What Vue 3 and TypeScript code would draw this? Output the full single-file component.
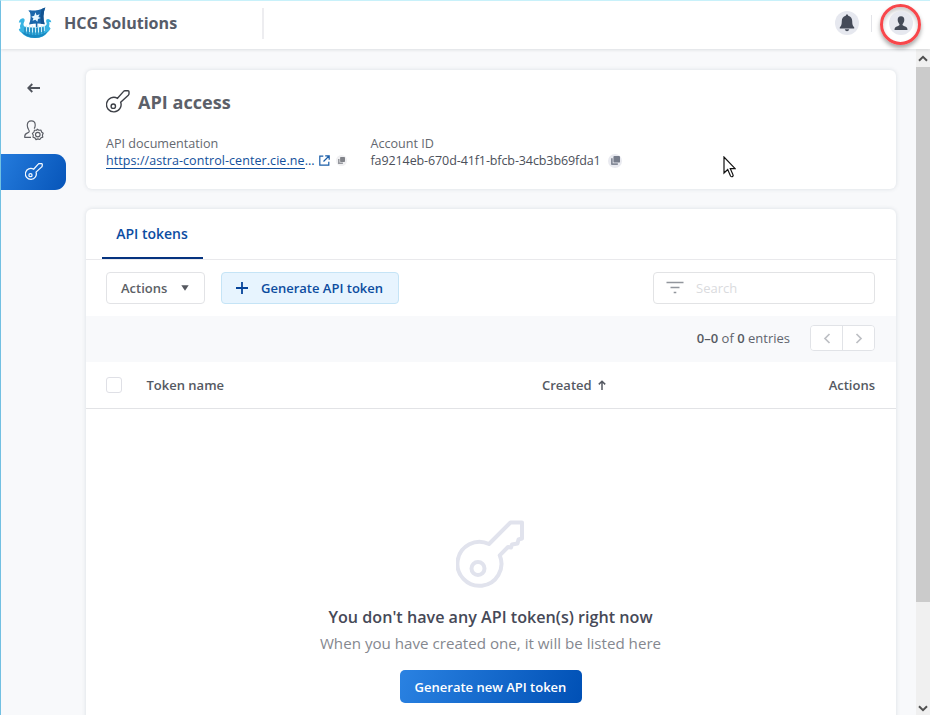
<script setup lang="ts">
import { ref } from 'vue'

interface Column {
  key: string
  label: string
}

const columns: Column[] = [
  { key: 'name', label: 'Token name' },
  { key: 'created', label: 'Created' },
  { key: 'actions', label: 'Actions' },
]
const accountId = 'fa9214eb-670d-41f1-bfcb-34cb3b69fda1'
const docsUrl = 'https://astra-control-center.cie.ne'
const search = ref<string>('')
const total = ref<number>(0)
const keyShape = 'M11.5 8.3 L17.6 1.4 Q18.1 .8 19 .8 H22 Q23 .8 23 1.8 V3.8 Q23 4.6 22.3 5.2 L14.7 12.2 A7.3 7.3 0 1 1 11.5 8.3 Z'
</script>

<template>
  <div class="app">
    <header class="topbar">
      <svg class="logo" width="34" height="32" viewBox="0 0 34 32">
        <path d="M10.3 3.6 Q12.5 2.8 14 3.6 Q20 3.6 27.3 .4 Q24 8 26.6 17.2 Q19 15.8 11 17.6 Q13.6 11 12 5.6Z" fill="#1a67ab" />
        <path d="M27.3 .4 Q24 8 26.6 17.2 L22.8 16.8 Q21.6 9 23.6 2Z" fill="#135390" />
        <path d="M17.5 5.2 L18.6 8.2 L21.6 7.2 L20.4 10 L22.8 11 L20 12 L19.4 14.8 L17.4 12.8 L14.6 13.8 L15.4 11.2 L13.2 9.8 L16.2 8.8Z" fill="#e6f7ff" />
        <path d="M18.6 16 V20" stroke="#1a67ab" stroke-width="1.6" />
        <path d="M.8 15.6 Q1.6 11.6 4.8 11.2 Q7.4 11.4 6.4 14.4 Q4.6 17.4 6.4 19.4 Q17 22 26.6 19.2 Q29.6 17.6 28.4 15.4 Q27.4 12 30.2 12 Q33 12.6 33.4 15.2 L31.2 15 Q32 17.4 31 19.6 L32.6 21.4 Q31 24.4 29.4 25.4 Q25.4 31 17 31 Q7.6 31 3.8 26 Q.8 24.6 .8 22 L2.4 21.4 Q1.4 18.6 3.2 15.4Z" fill="#38b4e3" />
        <path d="M3.4 24.6 Q9 28 17 28 Q25 28 30 24 Q26 31 17 31 Q7.4 31 3.4 24.6Z" fill="#1788c2" />
        <path d="M8.5 18.5 V24.5 M11.5 18.5 V25 M14.5 18.5 V25.5 M17.5 19 V25.5 M20.5 18.5 V25.5 M23.5 18.5 V25 M26.3 18.5 V24" stroke="#cfeffa" stroke-width="1.1" />
        <path d="M7 20.5 V26.5 M10 20.5 V27.5 M13 20.5 V28 M16 20.5 V28 M19 20.5 V28 M22 20.5 V27.5 M25 20.5 V26.5" stroke="#176fa8" stroke-width=".9" />
      </svg>
      <span class="brand">HCG Solutions</span>
      <span class="brand-divider"></span>
      <button class="round bell" aria-label="Notifications">
        <svg width="16" height="18" viewBox="0 0 16 18" fill="#454b58">
          <path d="M8 .5 C8.8 .5 9.2 1 9.2 1.7 C12 2.3 13.2 4.5 13.2 7 C13.2 10.6 13.8 12 15.2 13.2 V14.4 H.8 V13.2 C2.2 12 2.8 10.6 2.8 7 C2.8 4.5 4 2.3 6.8 1.7 C6.8 1 7.2 .5 8 .5Z" />
          <path d="M5.8 15.2 H10.2 Q9.8 17.2 8 17.2 Q6.2 17.2 5.8 15.2Z" />
        </svg>
      </button>
      <span class="user-divider"></span>
      <div class="highlight">
        <button class="round" aria-label="Account">
          <svg width="14" height="15" viewBox="0 0 14 15" fill="#444b58">
            <path d="M7 .3 C9.3 .3 10.5 1.8 10.3 4 C10.2 6 9.2 7.5 8.5 8.3 C8.5 9.5 9 9.8 10.5 10.2 C12.6 10.7 13.5 11.6 13.5 14 H.5 C.5 11.6 1.4 10.7 3.5 10.2 C5 9.8 5.5 9.5 5.5 8.3 C4.8 7.5 3.8 6 3.7 4 C3.5 1.8 4.7 .3 7 .3Z" />
          </svg>
        </button>
      </div>
    </header>

    <div class="body">
      <nav class="sidebar">
        <a class="nav-item">
          <svg width="14" height="10" viewBox="0 0 14 10" fill="none" stroke="#50545c" stroke-width="1.8">
            <path d="M13 5 H1.5 M5.3 1 L1.3 5 L5.3 9" />
          </svg>
        </a>
        <a class="nav-item">
          <svg width="20" height="21" viewBox="0 0 20 21" fill="none" stroke="#5b5e66" stroke-width="1.15">
            <path d="M7 17.3 H.8 C.3 14.5 1.4 13.7 3.6 12.9 C5.5 12.2 5.5 11 4.7 9.8 C3.6 8 3.2 6.8 3.3 4.8 C3.5 2.2 5 .8 7.3 .8 C9.7 .8 11.2 2.3 11.2 4.8 C11.3 6.4 10.8 7.6 10.2 8.6" />
            <path d="M13.3 9.2 L15 10.3 L17 10.1 L17.6 12 L19.2 13.3 L18.4 15.1 L18.8 17.1 L17 17.8 L15.8 19.5 L13.9 18.9 L12 19.6 L10.9 17.9 L9 17.2 L9.3 15.2 L8.4 13.4 L9.9 12.1 L10.5 10.2 L12.5 10.3 Z" stroke-linejoin="round" />
            <circle cx="13.8" cy="14.6" r="2.3" />
          </svg>
        </a>
        <a class="nav-item active">
          <svg width="18" height="18" viewBox="0 0 24 24" fill="none" stroke="#f4f9ff" stroke-width="1.7">
            <path :d="keyShape" /><circle cx="7.3" cy="16.2" r="2.1" />
          </svg>
        </a>
      </nav>

      <main class="content">
        <section class="card summary">
          <h1>
            <svg width="24" height="24" viewBox="0 0 24 24" fill="none" stroke="#3d4047" stroke-width="1.4">
              <path :d="keyShape" /><circle cx="7.3" cy="16.2" r="2.2" />
            </svg>
            <span>API access</span>
          </h1>
          <div class="details">
            <div class="detail docs">
              <span class="label">API documentation</span>
              <div class="value">
                <a class="link"><span class="url">{{ docsUrl }}</span>...</a>
                <svg class="external" width="11" height="11" viewBox="0 0 11 11" fill="none" stroke="#1a5da8" stroke-width="1.2">
                  <path d="M4.3 1.2 H.8 V10.2 H9.8 V6.7 M6.2 .8 H10.2 V4.8 M10 1 L4.5 6.5" />
                </svg>
                <span class="copy small">
                  <svg width="7" height="7" viewBox="0 0 10 10"><rect x="3" width="7" height="7" rx="1" fill="#818389" /><path d="M0 3 H2.2 V7.8 H7 V10 H0Z" fill="#96989e" /></svg>
                </span>
              </div>
            </div>
            <div class="detail">
              <span class="label">Account ID</span>
              <div class="value">
                <span class="account">{{ accountId }}</span>
                <span class="copy">
                  <svg width="9" height="9" viewBox="0 0 10 10"><rect x="2.7" width="7.3" height="7.3" rx="1" fill="#777d8b" /><path d="M0 2.4 H1.9 V8.1 H7.6 V10 H1 Q0 10 0 9Z" fill="#858b98" /></svg>
                </span>
              </div>
            </div>
          </div>
        </section>

        <section class="card tokens">
          <div class="tabs"><a class="tab">API tokens</a></div>
          <div class="toolbar">
            <button class="btn actions"><span>Actions</span>
              <svg width="8" height="6" viewBox="0 0 8 6"><path d="M.3 .3 H7.7 L4 5.8Z" fill="#55585f" /></svg>
            </button>
            <button class="btn generate">
              <svg width="12" height="12" viewBox="0 0 12 12"><path d="M6 0 V12 M0 6 H12" stroke="#06449a" stroke-width="1.8" /></svg>
              <span>Generate API token</span>
            </button>
            <label class="search">
              <svg width="18" height="13" viewBox="0 0 18 13" stroke="#92969d" stroke-width="1.6"><path d="M.5 1.5 H17.5 M4.5 6.5 H13.5 M7.7 11.5 H10.3" /></svg>
              <input v-model="search" placeholder="Search" />
            </label>
          </div>
          <div class="pager-row">
            <span class="entries"><b>0–{{ total }}</b> of <b>{{ total }}</b> entries</span>
            <div class="pager">
              <button aria-label="Previous"><svg width="8" height="11" viewBox="0 0 8 11"><path d="M6.5 1 L2 5.5 L6.5 10" /></svg></button>
              <button aria-label="Next"><svg width="8" height="11" viewBox="0 0 8 11"><path d="M1.5 1 L6 5.5 L1.5 10" /></svg></button>
            </div>
          </div>
          <div class="table-head">
            <span class="checkbox"></span>
            <span v-for="c in columns" :key="c.key" :class="['col', c.key]">
              <span>{{ c.label }}</span>
              <svg v-if="c.key === 'created'" width="8" height="10" viewBox="0 0 8 10" fill="none" stroke="#555962" stroke-width="1.5"><path d="M4 10 V1.5 M.8 4.4 L4 1.2 L7.2 4.4" /></svg>
            </span>
          </div>
          <div class="empty">
            <svg width="69" height="69" viewBox="0 0 69 69" fill="none" stroke="#e1e3ed" stroke-width="4">
              <path d="M33 24 L54.5 2.5 H66 V18.5 L62.5 19.5 L61.5 23.5 L56 24.5 L55 27.5 L52 27 L43.7 35.3 A22 22 0 1 1 33 24Z" stroke-linejoin="round" />
              <circle cx="22" cy="48.5" r="6.5" />
            </svg>
            <h2>You don't have any API token(s) right now</h2>
            <p>When you have created one, it will be listed here</p>
            <button class="primary">Generate new API token</button>
          </div>
        </section>
      </main>

      <div class="scrollbar">
        <div class="arrow"><svg width="10" height="7" viewBox="0 0 10 7"><path d="M1 5.8 L5 1.8 L9 5.8" /></svg></div>
        <div class="thumb"></div>
        <div class="arrow end"><svg width="10" height="7" viewBox="0 0 10 7"><path d="M1 1.2 L5 5.2 L9 1.2" /></svg></div>
      </div>
    </div>

    <svg class="cursor" width="13" height="22" viewBox="0 0 13 22">
      <path d="M1 1 V17 L4.7 13.5 L7.5 20 Q8.7 21.5 10 20 Q10.3 19.3 10 18.7 L7.3 12.7 H12.2Z" fill="#fff" stroke="#111" stroke-width="1.2" />
    </svg>
  </div>
</template>

<style>
body { margin: 0; overflow: hidden; }
</style>

<style scoped>
* { box-sizing: border-box; }
button { font: inherit; padding: 0; border: 0; white-space: nowrap; }
svg { display: block; flex: none; }
.app { position: relative; width: 930px; height: 715px; overflow: hidden; display: flex; flex-direction: column; background: #f8f9fb; border-left: 1px solid #72c0e2; border-top: 1px solid #c8f1fa; font-family: "Open Sans", "Noto Sans", sans-serif; font-size: 13px; color: #50545e; }
.topbar { position: relative; z-index: 1; flex: none; height: 48px; display: flex; align-items: center; padding: 0 9px 4px 17px; background: #fff; box-shadow: 0 1px 3px rgba(50, 55, 70, .14); }
.brand { width: 198px; margin-left: 12px; font-size: 16.1px; font-weight: 700; line-height: 24px; color: #565c69; }
.brand-divider { width: 2px; height: 31px; background: #ededf0; }
.round { width: 24px; height: 24px; border-radius: 50%; background: #e6e8ef; display: flex; align-items: center; justify-content: center; }
.bell { margin-left: auto; }
.user-divider { width: 1px; height: 17px; margin: 0 8px 0 12px; background: #e3e4e8; }
.highlight { width: 41px; height: 41px; margin-top: 2px; border: 3px solid #f8474b; border-radius: 50%; display: flex; align-items: center; justify-content: center; box-shadow: 0 3px 4px rgba(0, 0, 0, .35), inset 0 3px 4px rgba(0, 0, 0, .22); }
.highlight .round { margin-top: -2px; }
.body { flex: 1; min-height: 0; display: flex; }
.sidebar { width: 65px; padding-top: 21px; display: flex; flex-direction: column; gap: 6px; }
.nav-item { height: 36px; display: flex; align-items: center; justify-content: center; }
.nav-item.active { border-radius: 0 11px 11px 0; background: linear-gradient(115deg, #247bdc, #0755b9); }
.content { width: 850px; padding: 20.5px 20.5px 0 19.5px; display: flex; flex-direction: column; gap: 20px; }
.card { flex: none; background: #fff; border-radius: 6px; box-shadow: 0 0 4px rgba(50, 65, 90, .15); }
.summary { height: 119.5px; padding: 18.5px 20.5px; }
h1 { margin: 0 0 18.5px; height: 28px; display: flex; align-items: center; gap: 8px; font-size: 18.1px; font-weight: 700; color: #5c6069; }
.details { display: flex; }
.docs { width: 264.5px; }
.label { display: block; line-height: 18px; font-size: 12.6px; color: #646870; }
.value { display: flex; align-items: center; height: 17px; margin-top: -.5px; font-size: 12.5px; font-weight: 500; color: #4c505a; }
.link { color: #124f9b; width: 208px; line-height: 15px; letter-spacing: .07px; white-space: nowrap; }
.url { display: inline-block; height: 16px; border-bottom: 1px solid #124f9b; }
.account { letter-spacing: -.1px; }
.external { margin-left: 5px; }
.copy { width: 14px; height: 14px; margin-left: 7.5px; border-radius: 50%; background: #e9eaf0; display: flex; align-items: center; justify-content: center; }
.copy.small { width: 11px; height: 11px; margin-left: 5.5px; background: #f0f0f2; }
.tokens { height: 560px; }
.tabs { height: 51px; padding-left: 16.5px; border-bottom: 1px solid #e9e9ec; }
.tab { display: flex; width: 101px; height: 50px; padding-right: 1px; justify-content: center; align-items: center; border-bottom: 2px solid #05337f; font-size: 14px; font-weight: 600; color: #0c4da2; }
.toolbar { height: 56px; padding: 0 20.5px 1px; display: flex; align-items: center; }
.btn { height: 32px; border: 1px solid #e2e3e6; border-radius: 4px; background: #fff; display: flex; align-items: center; font-weight: 600; }
.actions { width: 99px; padding-left: 14px; gap: 14px; color: #5c5f66; }
.generate { width: 178px; margin-left: 16px; padding-left: 14px; gap: 13px; color: #0c4c9f; background: #e7f4fe; border-color: #c5e4f6; }
.search { width: 222px; height: 32px; margin-left: auto; padding-left: 12px; display: flex; align-items: center; gap: 12px; border: 1px solid #e2e3e5; border-radius: 4px; }
input { width: 150px; padding: 0; border: 0; outline: 0; font: inherit; background: transparent; }
input::placeholder { color: #dadbde; opacity: 1; }
.pager-row { height: 46px; padding: 0 20.5px 2px; display: flex; align-items: center; justify-content: flex-end; gap: 20px; background: #f8f9fb; }
.entries { font-size: 13px; color: #60646d; white-space: nowrap; }
.entries b { font-weight: 600; color: #555962; }
.pager { display: flex; width: 65px; height: 26px; border: 1px solid #e1e3e7; border-radius: 4px; overflow: hidden; }
.pager button { flex: 1; display: flex; align-items: center; justify-content: center; background: #fff; }
.pager button + button { border-left: 1px solid #e1e3e7; }
.pager path { fill: none; stroke: #bdbfc4; stroke-width: 1.7; }
.table-head { height: 47px; padding: 0 20.5px; display: flex; align-items: center; border-bottom: 1px solid #e2e3e6; font-weight: 600; color: #555962; }
.checkbox { width: 16px; height: 16px; border: 1px solid #dfe0e6; border-radius: 3px; }
.col { display: flex; align-items: center; gap: 6px; }
.name { width: 395.5px; margin-left: 24.5px; }
.actions.col { width: auto; margin-left: auto; padding: 0; color: #555962; }
.empty { padding-top: 111px; display: flex; flex-direction: column; align-items: center; }
h2 { margin: 14px 0 0; font-size: 16.15px; line-height: 28px; font-weight: 600; color: #464957; white-space: nowrap; }
p { margin: 0; font-size: 15.15px; line-height: 24px; color: #85888f; white-space: nowrap; }
.primary { width: 182px; height: 33px; margin-top: 15px; border-radius: 5px; background: linear-gradient(110deg, #2a82e2, #0050b5); color: #fff; font-size: 13px; font-weight: 600; }
.scrollbar { width: 14px; display: flex; flex-direction: column; background: #f0f0f0; }
.arrow { height: 18px; display: flex; align-items: center; justify-content: center; }
.arrow path { fill: none; stroke: #505050; stroke-width: 2; }
.arrow.end { margin-top: auto; height: 13px; }
.thumb { height: 535px; background: #cbcbcb; }
.cursor { position: absolute; left: 721.5px; top: 154.5px; }
</style>
